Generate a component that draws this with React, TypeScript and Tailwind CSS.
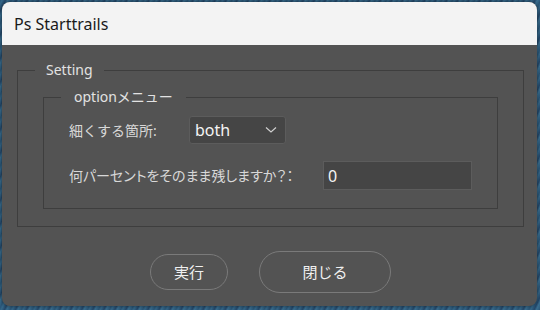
import React from "react";

export default function App() {
  return (
    <div className="w-[540px] h-[310px] overflow-hidden bg-[#2d5877] bg-[repeating-linear-gradient(115deg,#2a5575_0px,#35688a_2px,#24486a_5px,#3a6f90_7px,#2b587a_10px)] p-[2px] pr-[3px] pb-[4px] [font-family:'Noto_Sans','Noto_Sans_CJK_JP',sans-serif]">
      <div className="w-[535px] h-[304px] rounded-[8px] overflow-hidden flex flex-col bg-[#535353] shadow-[0_0_4px_rgba(0,0,0,0.5)]">
        <div className="h-[43px] shrink-0 bg-[#f3f3f3] flex items-center pl-[12px] text-[16px] text-[#1a1a1a]">
          Ps Starttrails
        </div>
        <div className="flex flex-col pl-[15px] pr-[13px] pt-[15px]">
          <fieldset className="border border-[#3e3e3e]">
            <legend className="ml-[17px] px-[11px] text-[14px] leading-[20px] text-[#e2e2e2]">Setting</legend>
            <div className="pl-[25px] pr-[25px] pb-[17px]">
              <fieldset className="mt-[7px] border border-[#3e3e3e]">
                <legend className="ml-[17px] px-[13px] text-[14px] leading-[20px] text-[#e2e2e2]">optionメニュー</legend>
                <div className="pl-[25px] pr-[25px] pt-[9px] pb-[18px]">
                  <div className="flex items-center h-[28px]">
                    <span className="w-[120px] text-[14px] text-[#d8d8d8]">細くする箇所:</span>
                    <div className="w-[97px] h-[28px] bg-[#454545] border border-[#5c5c5c] rounded-[3px] flex items-center justify-between pl-[5px] pr-[8px]">
                      <span className="text-[16px] text-[#f4f4f4] leading-none">both</span>
                      <svg width="12" height="8" viewBox="0 0 12 8" fill="none">
                        <path d="M1 1.5 L6 6 L11 1.5" stroke="#cfcfcf" strokeWidth="1.2" />
                      </svg>
                    </div>
                  </div>
                  <div className="flex items-center h-[29px] mt-[17px]">
                    <span className="w-[254px] text-[14px] text-[#d8d8d8] [font-feature-settings:'palt'] whitespace-nowrap">何パーセントをそのまま残しますか？：</span>
                    <div className="w-[149px] h-[29px] bg-[#454545] border border-[#5c5c5c] flex items-center pl-[4px]">
                      <span className="text-[16px] text-[#f4f4f4] leading-none">0</span>
                    </div>
                  </div>
                </div>
              </fieldset>
            </div>
          </fieldset>
          <div className="flex items-center justify-center gap-[31px] mt-[24px]">
            <button className="w-[78px] h-[36px] rounded-full border border-[#7a7a7a] text-[15px] text-[#f0f0f0]">実行</button>
            <button className="w-[132px] h-[42px] rounded-full border border-[#7a7a7a] text-[15px] text-[#f0f0f0]">閉じる</button>
          </div>
        </div>
      </div>
    </div>
  );
}
